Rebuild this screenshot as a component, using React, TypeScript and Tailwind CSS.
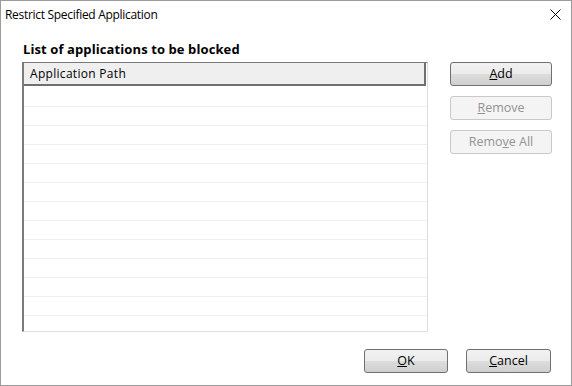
import React from "react";

const rows = Array.from({ length: 12 });

function Btn({
  children,
  disabled,
  className = "",
}: {
  children: React.ReactNode;
  disabled?: boolean;
  className?: string;
}) {
  return (
    <button
      disabled={disabled}
      className={`h-[24px] rounded-[3px] border text-[12.5px] leading-none ${
        disabled
          ? "border-[#c9c9c9] bg-[#f4f4f4] text-[#939393]"
          : "border-[#707070] bg-[linear-gradient(#f2f2f2_0%,#ebebeb_50%,#dddddd_51%,#cfcfcf_100%)] text-black"
      } ${className}`}
    >
      {children}
    </button>
  );
}

export default function App() {
  return (
    <div
      className="w-[572px] h-[386px] bg-white border border-[#9b9b9b] flex flex-col text-black"
      style={{ fontFamily: '"Open Sans", "Noto Sans", sans-serif' }}
    >
      {/* title bar */}
      <div className="h-[27px] flex items-center justify-between pl-[4px] pr-[10px]">
        <span className="text-[12px] tracking-[-0.3px]">Restrict Specified Application</span>
        <svg width="11" height="11" viewBox="0 0 11 11" className="-mt-[1px]">
          <path d="M0.5 0.5 L10.5 10.5 M10.5 0.5 L0.5 10.5" stroke="#000" strokeWidth="1" />
        </svg>
      </div>

      <div className="flex pl-[21px] pt-[14px]">
        <div className="flex flex-col">
          <div className="text-[13px] font-bold leading-none h-[20px] pl-[1px] pt-[1px] tracking-[0.1px]">
            List of applications to be blocked
          </div>
          <div className="w-[406px] h-[270px] border-l-2 border-t border-l-[#7a7a7a] border-t-[#7a7a7a] border-r border-b border-r-[#dedede] border-b-[#dedede] overflow-hidden">
            <div className="h-[23px] w-[402px] bg-[#efefef] border-[#6f6f6f] border-r-2 border-b-2 flex items-center pl-[6px] text-[12px] tracking-[0.3px]">
              Application Path
            </div>
            <div className="h-[21px] border-b border-[#efefef]" />
            {rows.map((_, i) => (
              <div key={i} className="h-[19px] border-b border-[#efefef]" />
            ))}
          </div>
        </div>

        <div className="flex flex-col gap-[10px] ml-[22px] mt-[20px]">
          <Btn className="w-[102px]">
            <u>A</u>dd
          </Btn>
          <Btn disabled className="w-[102px]">
            <u>R</u>emove
          </Btn>
          <Btn disabled className="w-[102px]">
            Remo<u>v</u>e All
          </Btn>
        </div>
      </div>

      <div className="flex justify-end gap-[18px] pr-[20px] mt-[17px]">
        <Btn className="w-[84px]">
          <u>O</u>K
        </Btn>
        <Btn className="w-[85px]">
          <u>C</u>ancel
        </Btn>
      </div>
    </div>
  );
}
